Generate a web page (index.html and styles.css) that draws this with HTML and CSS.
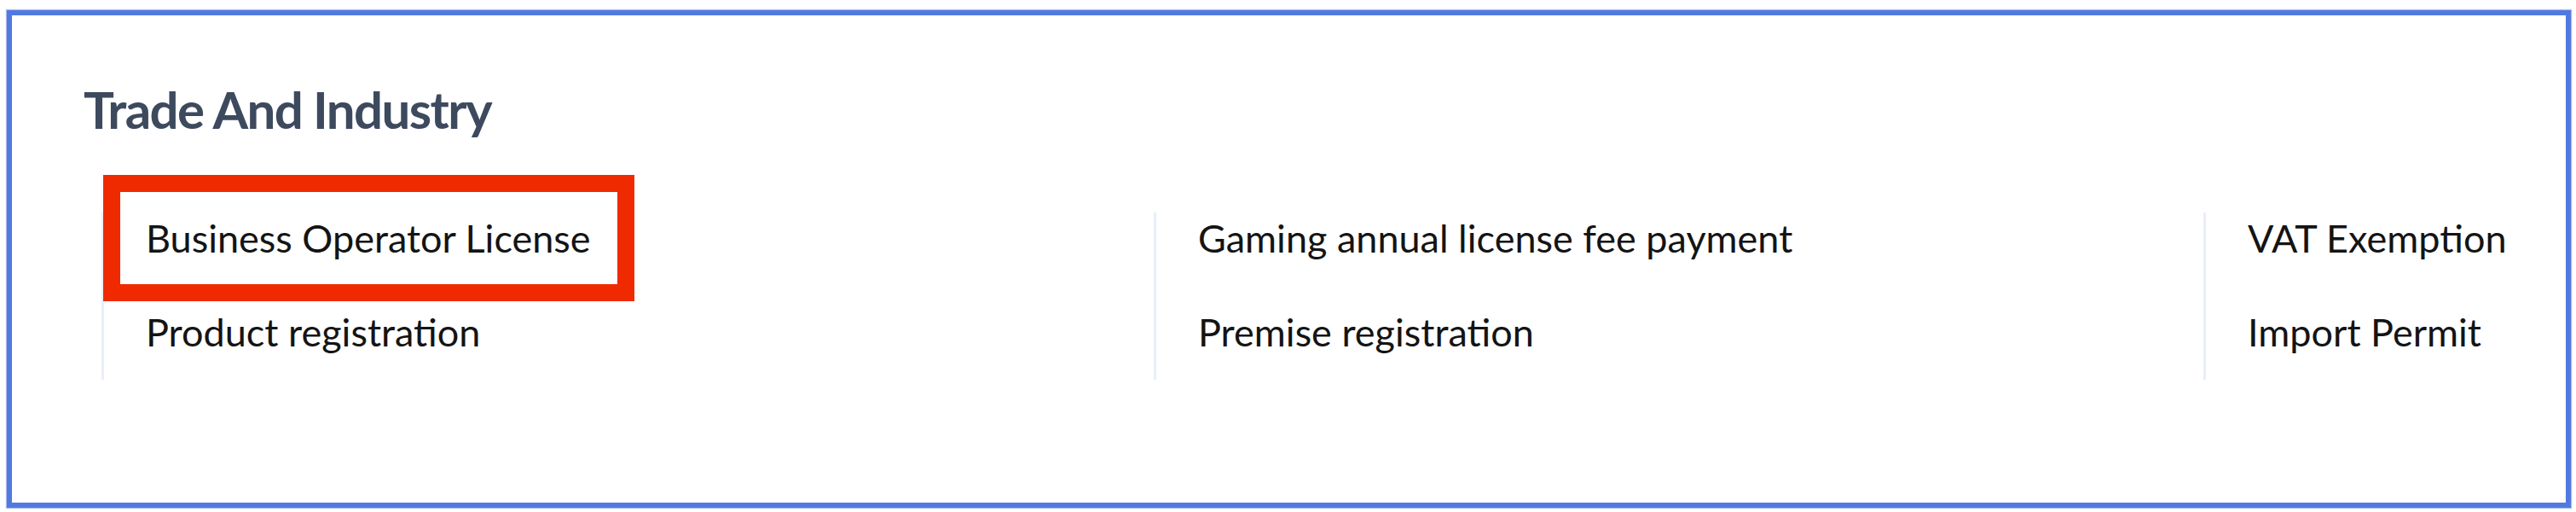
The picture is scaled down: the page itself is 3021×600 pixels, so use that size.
FILE: index.html
```html
<!DOCTYPE html>
<html lang="en">
<head>
<meta charset="utf-8">
<title>Trade And Industry</title>
<link rel="stylesheet" href="styles.css">
</head>
<body>
<section class="frame">
  <h2 class="title">Trade And Industry</h2>
  <div class="grid">
    <ul class="col">
      <li class="item highlighted">Business Operator License<span class="mark"></span></li>
      <li class="item">Product registration</li>
    </ul>
    <ul class="col">
      <li class="item">Gaming annual license fee payment</li>
      <li class="item">Premise registration</li>
    </ul>
    <ul class="col">
      <li class="item">VAT Exemption</li>
      <li class="item">Import Permit</li>
    </ul>
  </div>
</section>
</body>
</html>
```
FILE: styles.css
```css
html, body {
  margin: 0;
  padding: 0;
  background: #ffffff;
}
body {
  width: 3021px;
  height: 600px;
  overflow: hidden;
}
.frame {
  box-sizing: border-box;
  margin: 12px 6px 0 8px;
  height: 583px;
  border: 6px solid #5179e0;
  box-shadow: 0 0 1px 1px #a9bdf0;
  overflow: hidden;
  font-family: Lato, "Noto Sans", sans-serif;
}
.title {
  margin: 0;
  padding: 70px 0 0 84px;
  font-size: 60px;
  line-height: 80px;
  font-weight: 700;
  letter-spacing: -1.6px;
  color: #3d4a5e;
}
.grid {
  display: grid;
  grid-template-columns: 1234px 1231px 1231px;
  margin: 81px 0 0 105px;
}
.col {
  list-style: none;
  margin: 0;
  padding: 0 0 26px 49px;
  border-left: 3px solid #e9eefb;
  display: flex;
  flex-direction: column;
  gap: 50px;
}
.item {
  position: relative;
  font-size: 45px;
  line-height: 60px;
  color: #141414;
  white-space: nowrap;
}
.mark {
  position: absolute;
  left: -50px;
  top: -44px;
  width: 623px;
  height: 148px;
  box-sizing: border-box;
  border: 20px solid #ef2a00;
}
```
